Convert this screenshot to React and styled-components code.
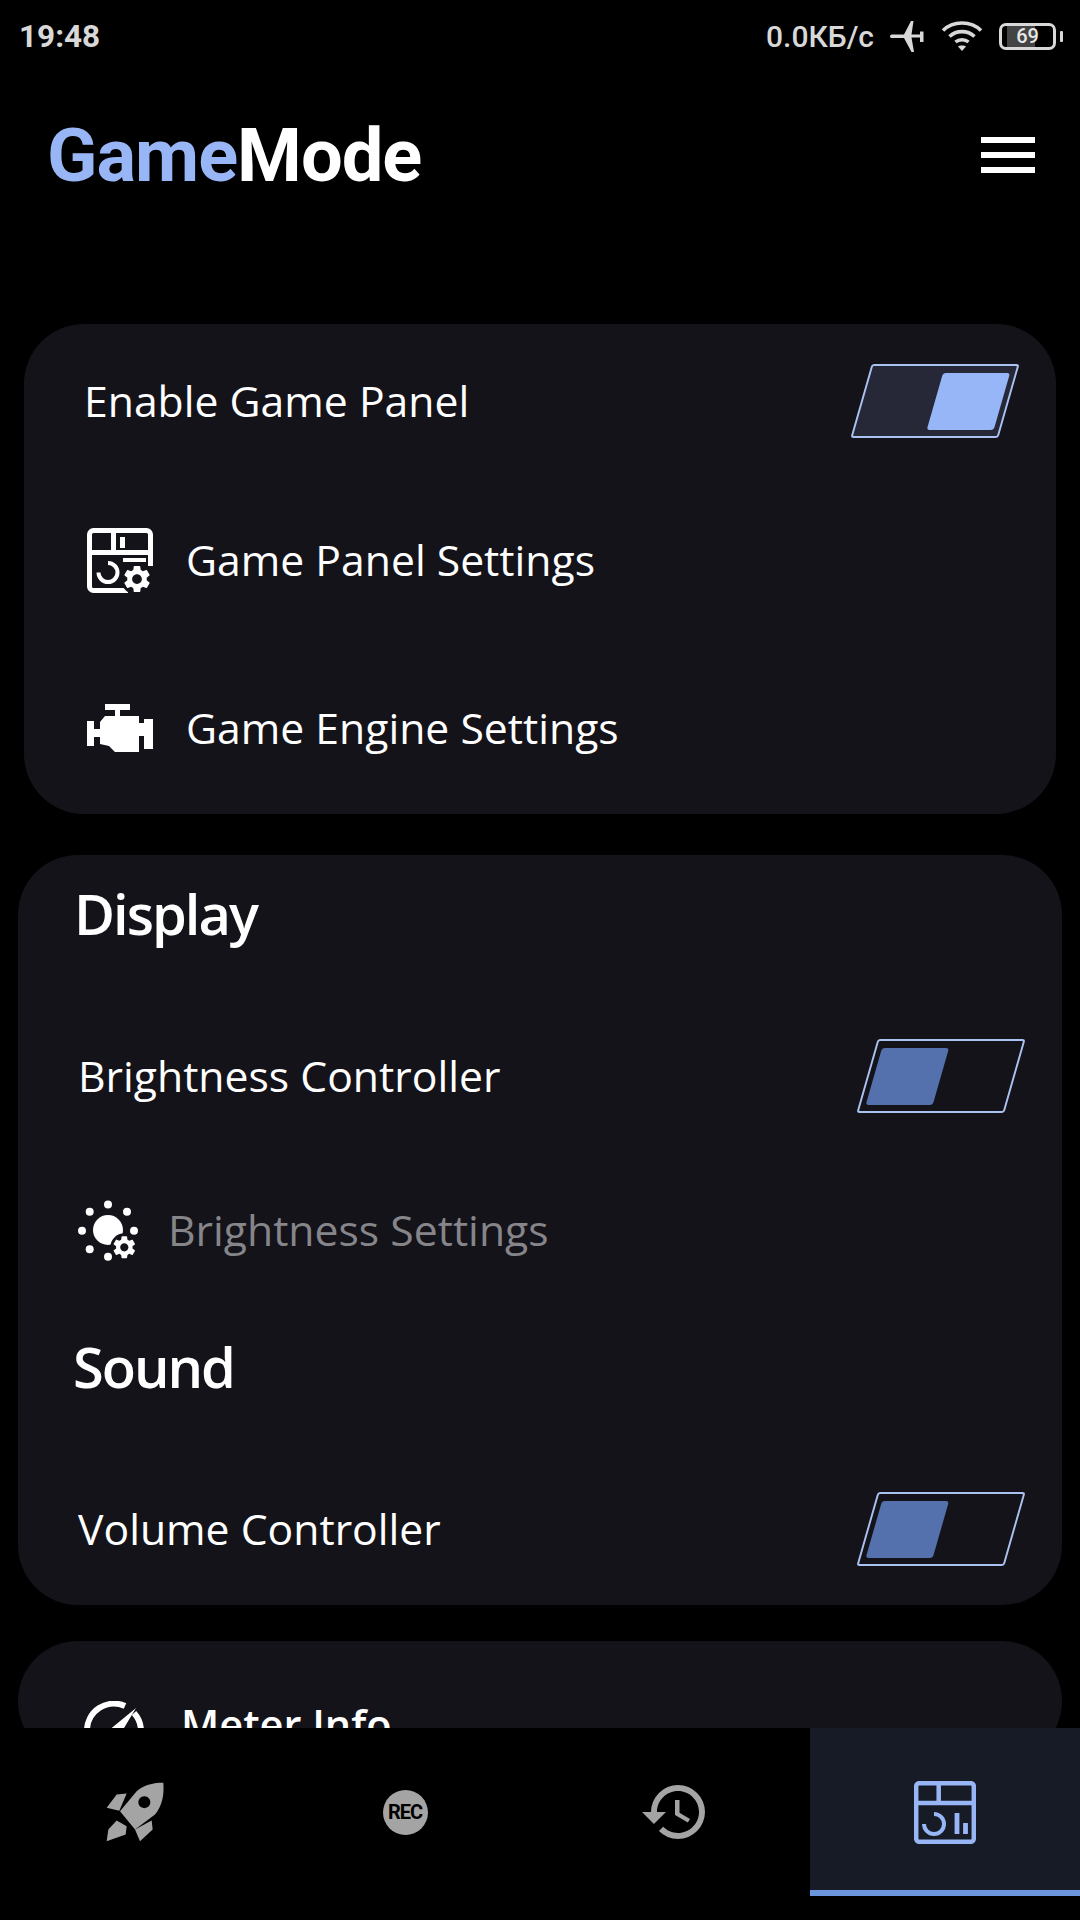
import React from "react";
import styled, { createGlobalStyle } from "styled-components";

const GlobalStyle = createGlobalStyle`
  html, body {
    margin: 0;
    padding: 0;
    background: #000;
  }
`;

const GEAR =
  "M19.14 12.94c.04-.3.06-.61.06-.94 0-.32-.02-.64-.07-.94l2.03-1.58c.18-.14.23-.41.12-.61l-1.92-3.32c-.12-.22-.37-.29-.59-.22l-2.39.96c-.5-.38-1.03-.7-1.62-.94l-.36-2.54c-.04-.24-.24-.41-.48-.41h-3.84c-.24 0-.43.17-.47.41l-.36 2.54c-.59.24-1.13.57-1.62.94l-2.39-.96c-.22-.08-.47 0-.59.22L2.74 8.87c-.12.21-.08.47.12.61l2.03 1.58c-.05.3-.09.63-.09.94s.02.64.07.94l-2.03 1.58c-.18.14-.23.41-.12.61l1.92 3.32c.12.22.37.29.59.22l2.39-.96c.5.38 1.03.7 1.62.94l.36 2.54c.05.24.24.41.48.41h3.84c.24 0 .44-.17.47-.41l.36-2.54c.59-.24 1.13-.56 1.62-.94l2.39.96c.22.08.47 0 .59-.22l1.92-3.32c.12-.22.07-.47-.12-.61l-2.01-1.58zM12 15.6c-1.98 0-3.6-1.62-3.6-3.6s1.62-3.6 3.6-3.6 3.6 1.62 3.6 3.6-1.62 3.6-3.6 3.6z";

const Screen = styled.div`
  width: 1080px;
  height: 1920px;
  display: flex;
  flex-direction: column;
  overflow: hidden;
  background: #000;
  color: #fff;
  font-family: "Open Sans", "Noto Sans", sans-serif;
`;

const StatusBar = styled.div`
  height: 72px;
  flex: none;
  display: flex;
  align-items: center;
  justify-content: space-between;
  padding: 0 17px 0 19px;
  color: #d8d8d8;
  font: 500 30px Roboto, sans-serif;
`;

const Clock = styled.span`
  font-size: 31.5px;
  font-weight: 700;
`;

const StatusRight = styled.div`
  display: flex;
  align-items: center;
  gap: 16px;
`;

const Battery = styled.div`
  position: relative;
  width: 57px;
  height: 27px;
  box-sizing: border-box;
  margin-right: 7px;
  border: 3px solid #d8d8d8;
  border-radius: 7px;
  display: flex;
  align-items: center;
  justify-content: center;
  color: #e8e8e8;
  font: 500 20px Roboto, sans-serif;
  background: linear-gradient(90deg, #000 5px, #444 5px, #444 33px, #000 33px);
  background-clip: padding-box;

  &::after {
    content: "";
    position: absolute;
    right: -10px;
    top: 5px;
    width: 3px;
    height: 11px;
    background: #d8d8d8;
    border-radius: 1px;
  }
`;

const Header = styled.div`
  height: 166px;
  flex: none;
  display: flex;
  align-items: center;
  justify-content: space-between;
  padding: 0 45px 0 47px;
  box-sizing: border-box;
`;

const Title = styled.div`
  font: 700 74px Roboto, sans-serif;
  letter-spacing: -1px;
  color: #fff;
  span {
    color: #98b6f5;
  }
`;

const MenuButton = styled.div`
  width: 54px;
  display: flex;
  flex-direction: column;
  gap: 9px;
  i {
    display: block;
    height: 6px;
    background: #fff;
  }
`;

const Scroller = styled.div`
  flex: 1;
  min-height: 0;
  overflow: hidden;
  padding-top: 86px;
`;

const Card = styled.section`
  background: #14131a;
  border-radius: 60px;
  margin: ${(p) => p.$margin};
  padding-top: ${(p) => p.$top || 0}px;
`;

const Row = styled.div`
  height: ${(p) => p.$h}px;
  display: flex;
  align-items: center;
  justify-content: space-between;
  padding: 0 47px 0 ${(p) => p.$left || 60}px;
`;

const Label = styled.div`
  font-size: 42.7px;
  line-height: 1;
  color: #fff;
  margin-left: ${(p) => p.$gap || 0}px;
`;

const MutedLabel = styled(Label)`
  color: #85858a;
`;

const MeterLabel = styled(Label)`
  font-size: 41.5px;
  font-weight: 600;
  margin-bottom: 12px;
`;

const Heading = styled.h2`
  margin: 0 0 4px;
  font-size: 56px;
  line-height: 1;
  font-weight: 600;
  letter-spacing: -2px;
`;

const IconLabel = styled.div`
  display: flex;
  align-items: center;
`;

const Switch = styled.div`
  width: 148px;
  height: 74px;
  box-sizing: border-box;
  padding: 0 5px;
  display: flex;
  align-items: center;
  justify-content: ${(p) => (p.$on ? "flex-end" : "flex-start")};
  border: 2px solid #aac2f2;
  border-radius: 3px;
  background: ${(p) => (p.$on ? "#262837" : "transparent")};
  transform: skewX(-16deg);
`;

const Knob = styled.div`
  width: 67px;
  height: 57px;
  border-radius: 3px;
  background: ${(p) => (p.$on ? "#97b6f8" : "#5471ad")};
`;

const NavBar = styled.nav`
  height: 168px;
  flex: none;
  margin-bottom: 24px;
  display: grid;
  grid-template-columns: repeat(4, 270px);
`;

const NavTab = styled.div`
  display: flex;
  align-items: center;
  justify-content: center;
  box-sizing: border-box;
  padding-top: ${(p) => (p.$active ? 6 : 0)}px;
  background: ${(p) => (p.$active ? "#161b26" : "transparent")};
  border-bottom: ${(p) => (p.$active ? "6px solid #6b95dc" : "none")};
`;

const RecBadge = styled.div`
  width: 45px;
  height: 45px;
  border-radius: 50%;
  background: #a4a4a4;
  color: #000;
  display: flex;
  align-items: center;
  justify-content: center;
  font: 700 20px Roboto, sans-serif;
  letter-spacing: -1px;
`;

// gear glyph spans about 9.6 units from its centre in the 24 box
const Gear = ({ x, y, r, mask }) => (
  <g>
    <circle cx={x} cy={y} r={r + 3} fill={mask} />
    <g transform={`translate(${x} ${y}) scale(${r / 9.6}) translate(-12 -12)`}>
      <path d={GEAR} fill="#fff" />
    </g>
  </g>
);

const AirplaneIcon = () => (
  <svg width="35" height="31" viewBox="0 0 35 31" fill="#d8d8d8">
    <path d="M0 15.5C0 14 1 13.5 3 13.5H14L21 0h2.5L21.5 13.5H30V10.5h3.5V21H30v-4.5h-8.5L24 31h-2.5L14 17H3c-2 0-3-.5-3-1.5z" />
  </svg>
);

const WifiIcon = () => (
  <svg width="42" height="30" viewBox="0 0 42 30" fill="none" stroke="#d8d8d8" strokeWidth="3.6">
    <path d="M2 9.5C12-.5 30-.5 40 9.5" />
    <path d="M8.5 15.5c7-6.5 18-6.5 25 0" />
    <path d="M14.5 21c3.5-3 9.5-3 13 0" />
    <path d="M21 30l-4-4.5c2-1.3 6-1.3 8 0z" fill="#d8d8d8" stroke="none" />
  </svg>
);

const PanelGearIcon = () => (
  <svg width="66" height="65" viewBox="0 0 66 65" fill="none">
    <path d="M41 62.5H6.5a4 4 0 0 1-4-4v-52a4 4 0 0 1 4-4h53a4 4 0 0 1 4 4V38" stroke="#fff" strokeWidth="5" />
    <path d="M2 24.5h62M26.5 3v21" stroke="#fff" strokeWidth="5" />
    <rect x="33" y="9" width="5" height="11" fill="#fff" />
    <rect x="36" y="30" width="23" height="4" fill="#fff" />
    <path d="M21 35a9.5 9.5 0 1 1-9.5 9.5" stroke="#fff" strokeWidth="4" />
    <Gear x={50} y={51} r={13} mask="#14131a" />
  </svg>
);

const EngineIcon = () => (
  <svg width="66" height="48" viewBox="0 0 66 48" fill="#fff">
    <path d="M18 0h25v6h-10v6h19v7h5v-4h9v30h-9V32h-5v16H28l-6-6-9-2v-7H7v9H0V17h7v8h6v-7l5-6h10V6H18z" />
  </svg>
);

const SunGearIcon = () => (
  <svg width="62" height="62" viewBox="0 0 62 62" fill="#fff">
    <circle cx="31" cy="31" r="15" />
    {[[31, 5.5], [50, 12.7], [57, 31.7], [12.7, 12.7], [5, 31.7], [12.7, 50.3], [31, 57.7]].map(([cx, cy]) => (
      <circle key={`${cx}-${cy}`} cx={cx} cy={cy} r="4" />
    ))}
    <Gear x={47.3} y={48.3} r={11} mask="#14131a" />
  </svg>
);

const GaugeIcon = () => (
  <svg width="60" height="60" viewBox="0 0 60 60" fill="none">
    <path d="M41 5A27 27 0 0 0 3 30a27 27 0 0 0 8 19M50 12a27 27 0 0 1 7 18 27 27 0 0 1-8 19" stroke="#fff" strokeWidth="6" />
    <path d="M52 7L34 37l-10-7z" fill="#fff" />
  </svg>
);

const RocketIcon = () => (
  <svg width="60" height="62" viewBox="0 0 180 185" fill="#a4a4a4">
    <path d="M175 5c3 35-3 70-25 95l-60 45-45-55 50-60c25-20 50-25 80-25zM118 45a18 18 0 1 0 .01 0z" fillRule="evenodd" />
    <path d="M5 80l30-40 30-3-22 52zM90 145l50-27 3 27-38 35zM5 180l5-35 25-27 30 17-3 25z" />
  </svg>
);

const HistoryIcon = () => (
  <svg width="72" height="72" viewBox="0 0 24 24" fill="#a4a4a4">
    <path d="M13 3a9 9 0 0 0-9 9H1l3.89 3.89.07.14L9 12H6c0-3.87 3.13-7 7-7s7 3.13 7 7-3.13 7-7 7c-1.93 0-3.68-.79-4.94-2.06l-1.42 1.42A8.954 8.954 0 0 0 13 21a9 9 0 0 0 0-18zm-1 5v5l4.28 2.54.72-1.21-3.5-2.08V8H12z" />
  </svg>
);

const PanelChartIcon = () => (
  <svg width="62" height="63" viewBox="0 0 62 63" fill="none" stroke="#98b6f5">
    <rect x="2.2" y="2.2" width="57.6" height="58.6" rx="3" strokeWidth="4.5" />
    <path d="M2 22h58M24.7 3v19" strokeWidth="4.5" />
    <path d="M20 33a10 10 0 1 1-10 10" strokeWidth="4" />
    <path d="M43 32v21M51.5 42v11" strokeWidth="4.8" />
  </svg>
);

export default function App() {
  return (
    <Screen>
      <GlobalStyle />
      <StatusBar>
        <Clock>19:48</Clock>
        <StatusRight>
          <span>0.0КБ/с</span>
          <AirplaneIcon />
          <WifiIcon />
          <Battery>69</Battery>
        </StatusRight>
      </StatusBar>
      <Header>
        <Title><span>Game</span>Mode</Title>
        <MenuButton><i /><i /><i /></MenuButton>
      </Header>
      <Scroller>
        <Card $margin="0 24px">
          <Row $h={154}>
            <Label>Enable Game Panel</Label>
            <Switch $on><Knob $on /></Switch>
          </Row>
          <Row $h={164} $left={63}>
            <IconLabel>
              <PanelGearIcon />
              <Label $gap={33}>Game Panel Settings</Label>
            </IconLabel>
          </Row>
          <Row $h={172} $left={63}>
            <IconLabel>
              <EngineIcon />
              <Label $gap={33}>Game Engine Settings</Label>
            </IconLabel>
          </Row>
        </Card>
        <Card $margin="41px 18px 0">
          <Row $h={120} $left={56}><Heading>Display</Heading></Row>
          <Row $h={202}>
            <Label>Brightness Controller</Label>
            <Switch><Knob /></Switch>
          </Row>
          <Row $h={106} $left={59}>
            <IconLabel>
              <SunGearIcon />
              <MutedLabel $gap={29}>Brightness Settings</MutedLabel>
            </IconLabel>
          </Row>
          <Row $h={170} $left={55}><Heading>Sound</Heading></Row>
          <Row $h={152}>
            <Label>Volume Controller</Label>
            <Switch><Knob /></Switch>
          </Row>
        </Card>
        <Card $margin="36px 18px 0" $top={60}>
          <Row $h={60} $left={66}>
            <IconLabel>
              <GaugeIcon />
              <MeterLabel $gap={37}>Meter Info</MeterLabel>
            </IconLabel>
          </Row>
        </Card>
      </Scroller>
      <NavBar>
        <NavTab><RocketIcon /></NavTab>
        <NavTab><RecBadge>REC</RecBadge></NavTab>
        <NavTab><HistoryIcon /></NavTab>
        <NavTab $active><PanelChartIcon /></NavTab>
      </NavBar>
    </Screen>
  );
}
